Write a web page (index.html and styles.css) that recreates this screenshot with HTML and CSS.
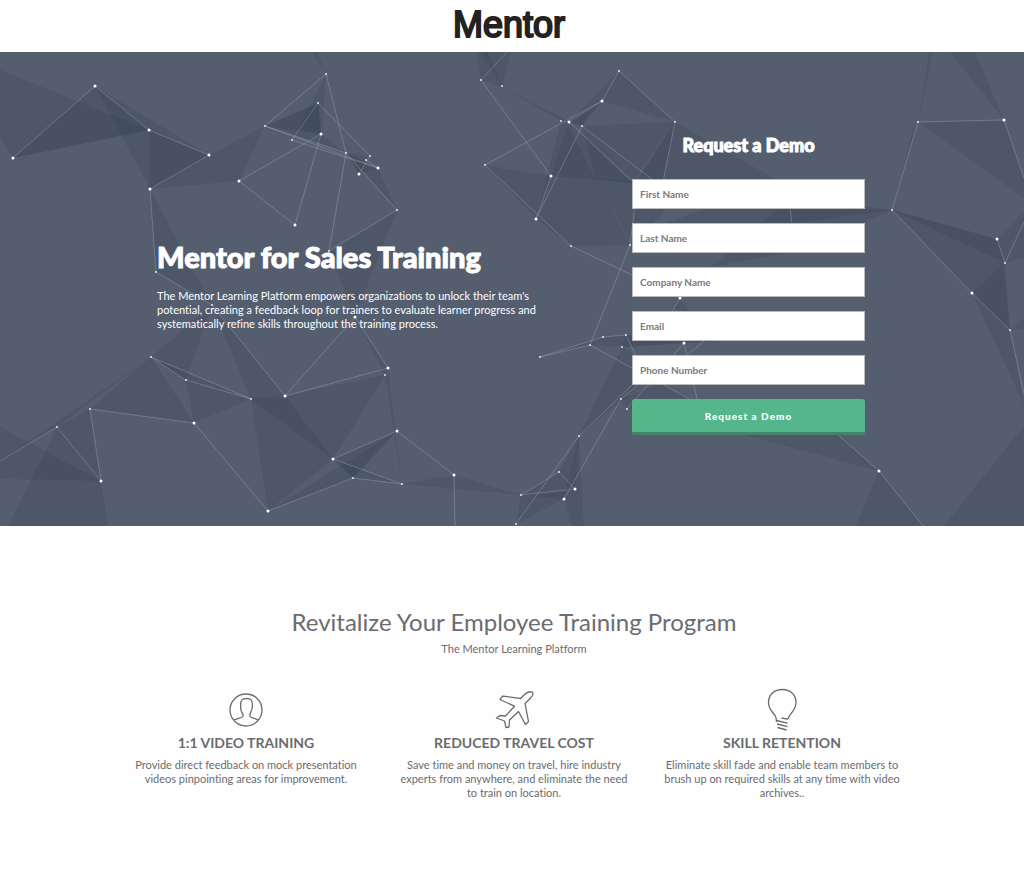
FILE: index.html
```html
<!DOCTYPE html>
<html lang="en">
<head>
<meta charset="utf-8">
<meta name="viewport" content="width=device-width, initial-scale=1">
<title>Mentor for Sales Training</title>
<link rel="stylesheet" href="styles.css">
</head>
<body>
<header class="site-header"><span class="logo">Mentor</span></header>
<main>
<section class="hero">
<svg class="hero-art" viewBox="0 52 1024 474" preserveAspectRatio="xMidYMid slice" aria-hidden="true">
<g class="facets">
<path d="M0 70L149 130L13 158L0 137Z"/><path d="M13 158L95 86L149 130Z"/><path d="M95 86L209 155L150 189Z"/><path d="M149 130L209 155L150 189Z"/><path d="M150 189L209 155L239 181Z"/><path d="M209 155L265 126L239 181Z"/><path d="M150 189L212 305L156 272Z"/>
<path d="M265 126L318 103L321 134Z"/><path d="M265 126L318 103L321 134Z"/><path d="M326 74L322 134L298 129Z"/><path d="M265 126L321 134L346 153Z"/><path d="M346 153L370 156L359 174Z"/><path d="M346 153L378 168L359 174Z"/><path d="M346 153L378 168L397 210Z"/><path d="M329 251L397 210L355 317Z"/><path d="M312 52L317 52L326 74Z"/>
<path d="M477 52L511 52L502 87L481 80Z"/><path d="M480 52L488 52L502 86Z"/><path d="M502 87L569 121L561 121Z"/>
<path d="M619 71L675 122L602 101L569 122Z"/><path d="M602 101L569 122L582 126Z"/><path d="M602 101L569 122L582 126Z"/><path d="M582 126L675 122L632 183L595 178Z"/><path d="M561 121L569 122L632 183L551 176Z"/><path d="M568 125L595 178L551 176Z"/><path d="M485 165L551 176L536 219Z"/><path d="M561 121L551 176L536 219Z"/><path d="M551 176L595 178L630 245L571 246L536 219Z"/><path d="M595 178L690 183L632 245Z"/><path d="M675 122L637 180L663 180Z"/><path d="M675 122L637 180L663 180Z"/><path d="M675 122L663 182L780 182Z"/><path d="M780 207L892 210L790 252L712 267Z"/><path d="M640 232L760 190L892 210L780 225Z"/>
<path d="M929 52L933 52L918 122Z"/><path d="M918 122L892 210L914 126Z"/><path d="M950 52L975 52L1004 120Z"/><path d="M918 122L1004 120L1024 178L1024 198Z"/><path d="M892 210L997 239L1005 263Z"/><path d="M892 210L997 239L972 293Z"/><path d="M997 239L1005 263L1010 330L972 293Z"/><path d="M997 239L1024 212L1024 258L1005 263Z"/><path d="M972 293L1003 263L1010 330Z"/><path d="M972 293L1010 330L1024 405Z"/><path d="M1010 330L1024 318V329Z"/>
<path d="M151 357L212 305L186 380Z"/><path d="M151 357L90 409L194 423Z"/><path d="M151 357L57 427L0 461Z"/><path d="M90 409L57 427L101 481Z"/><path d="M0 427L101 481L0 479Z"/><path d="M57 427L101 481L108 526H8Z"/><path d="M151 357L186 380L251 399Z"/><path d="M151 357L186 380L173 369Z"/><path d="M186 380L251 399L194 423Z"/><path d="M212 305L285 396L251 399Z"/>
<path d="M251 399L285 396L333 459Z"/><path d="M251 399L285 396L333 459Z"/><path d="M251 399L333 459L268 511Z"/><path d="M285 396L385 375L333 459Z"/><path d="M333 459L397 431L353 478Z"/><path d="M268 511L397 431L353 478Z"/><path d="M333 459L353 478L402 484Z"/><path d="M385 375L388 368L402 484Z"/><path d="M355 317L388 368L385 375Z"/><path d="M402 484L454 475L521 495Z"/>
<path d="M540 357L603 337L626 335L590 345Z"/><path d="M590 345L626 335L622 347Z"/><path d="M626 335L720 341L622 347Z"/><path d="M626 335L720 341L622 347Z"/><path d="M622 347L660 370L579 436Z"/><path d="M621 399L660 383L690 399L627 409Z"/><path d="M680 298L672 312H690Z"/><path d="M579 436L564 499L521 495L559 472Z"/><path d="M579 436L575 490L521 495L564 499Z"/><path d="M579 436L584 526H571L564 499Z"/><path d="M521 495L564 499L516 524Z"/>
<path d="M700 423L838 435L879 471Z"/><path d="M879 471L923 526H856Z"/><path d="M1024 426V526H944Z"/>
</g>
<path class="links" d="M13 158L95 86L149 130L209 155L150 189L156 272L212 305L285 396L355 317L388 368L285 396M239 181L321 134L295 225L239 181M265 126L326 74L346 153L329 251L397 210L346 153L265 126L378 168L292 140L318 103L370 156L359 174M366 160L378 168M507 52L481 80L551 176L536 219L582 126L653 180M485 165L602 101L569 122L632 181M485 165L571 246L632 275M602 101L619 71L675 122L663 182M630 245L590 345L632 368M630 245L635 205M540 357L603 337L626 335L640 365M540 357L590 345M632 385L579 436L516 524M564 499L621 399L650 375M627 409L684 343L697 399M672 312L680 298M684 358L704 341M664 385L700 405M521 495L559 472L575 489L521 495M790 207L792 224M892 210L918 122L1004 120L1024 178M892 210L972 293L1010 330L1024 394M997 239L1005 263L1024 222M0 461L57 427L101 481L90 409L194 423L268 511L353 478L402 484L333 459L397 431L454 475L455 526M151 357L251 399L186 380L151 357M838 435L879 471L923 526"/>
<path class="dots-small" d="M156 272h0M326 74h0M318 103h0M265 126h0M292 140h0M346 153h0M370 156h0M366 160h0M397 210h0M329 251h0M481 80h0M502 86h0M619 71h0M561 121h0M582 126h0M675 122h0M485 165h0M571 246h0M630 245h0M918 122h0M892 210h0M1005 263h0M1010 330h0M151 357h0M186 380h0M251 399h0M90 409h0M57 427h0M212 305h0M385 375h0M353 478h0M402 484h0M540 357h0M590 345h0M603 337h0M626 335h0M622 347h0M621 399h0M627 409h0M579 436h0M559 472h0M521 495h0M516 524h0"/>
<path class="dots-large" d="M13 158h0M95 86h0M149 130h0M209 155h0M150 189h0M239 181h0M321 134h0M378 168h0M359 174h0M295 225h0M602 101h0M569 122h0M551 176h0M536 219h0M1004 120h0M997 239h0M972 293h0M194 423h0M101 481h0M285 396h0M388 368h0M397 431h0M333 459h0M454 475h0M268 511h0M355 317h0M680 298h0M684 343h0M575 489h0M564 499h0M879 471h0"/>
</svg>
<div class="hero-content">
<div class="pitch">
<h1>Mentor for Sales Training</h1>
<p>The Mentor Learning Platform empowers organizations to unlock their team's potential, creating a feedback loop for trainers to evaluate learner progress and systematically refine skills throughout the training process.</p>
</div>
<form class="demo-form">
<h2>Request a Demo</h2>
<input type="text" placeholder="First Name" aria-label="First Name">
<input type="text" placeholder="Last Name" aria-label="Last Name">
<input type="text" placeholder="Company Name" aria-label="Company Name">
<input type="email" placeholder="Email" aria-label="Email">
<input type="tel" placeholder="Phone Number" aria-label="Phone Number">
<button type="button">Request a Demo</button>
</form>
</div>
</section>
<section class="benefits">
<h2>Revitalize Your Employee Training Program</h2>
<p class="subtitle">The Mentor Learning Platform</p>
<div class="benefit-grid">
<article class="benefit">
<svg viewBox="0 0 44 44" aria-hidden="true"><circle cx="22" cy="23" r="16"/><path d="M10 33C14 31 18 31 19 29.500C19.500 27.500 18.500 27 17.500 24.500C16.500 23 16.500 21 16.700 18C16.500 13 18.500 11.500 22.500 11.500C27 11.500 28.500 13 28.300 18C28.500 21 28 23 27 24.500C26 27 25.500 27.500 26 29.500C27 31 31 31 34 33"/></svg>
<h3>1:1 VIDEO TRAINING</h3>
<p>Provide direct feedback on mock presentation videos pinpointing areas for improvement.</p>
</article>
<article class="benefit">
<svg viewBox="0 0 44 44" aria-hidden="true"><path d="M40.500 5.200C37.500 4 34.500 5.500 32.500 7.500L28.500 11.500C21 10.500 15 9.500 10.500 9.200L8 12.500L22.500 19.200L13.500 29L8 28.500L4.500 31L12.500 34L14 40.500L17 40L17.500 33L26.500 24.500L33.500 37.500L36.500 34.500L33 16.500L38.500 11C41 9 41.300 7 40.500 5.200Z"/></svg>
<h3>REDUCED TRAVEL COST</h3>
<p>Save time and money on travel, hire industry experts from anywhere, and eliminate the need to train on location.</p>
</article>
<article class="benefit">
<svg viewBox="0 0 44 44" aria-hidden="true"><path d="M16.500 35L16 30.500C15.500 27 8.500 24 8.500 15.500C8.500 7.500 14.500 2.500 22.300 2.500C30 2.500 36 7.500 36 15.500C36 24 29 27 28.500 31L27.500 32.200L21.500 31M16.500 33.500L27.500 36.200M17 37L27.500 39.700M17.500 40.500L26.500 43"/></svg>
<h3>SKILL RETENTION</h3>
<p>Eliminate skill fade and enable team members to brush up on required skills at any time with video archives..</p>
</article>
</div>
</section>
</main>
</body>
</html>
```
FILE: styles.css
```css
* {
  box-sizing: border-box;
}

body {
  margin: 0;
  background: #fefefe;
  color: #6b6c70;
  font: 11px/14px Lato, "Open Sans", sans-serif;
  font-variant-ligatures: none;
}

h1, h2, h3, p {
  margin: 0;
}

.site-header {
  display: flex;
  justify-content: center;
  padding: 4px 0 6px;
}

.logo {
  padding-right: 6px;
  color: #222;
  font: 400 36px/42px "Liberation Sans", Arial, sans-serif;
  -webkit-text-stroke: 2px #222;
}

.hero {
  position: relative;
  padding: 82px 26px 91px 24px;
  background: #555e6f;
  color: #fff;
}

.hero-art {
  position: absolute;
  inset: 0;
  width: 100%;
  height: 100%;
}

.facets {
  fill: #1c3040;
  fill-opacity: 0.13;
}

.links {
  fill: none;
  stroke: #c5cbd8;
  stroke-opacity: 0.28;
}

.dots-small,
.dots-large {
  stroke: #fff;
  stroke-linecap: round;
}

.dots-small {
  stroke-width: 2px;
  stroke-opacity: 0.85;
}

.dots-large {
  stroke-width: 3px;
}

.hero-content {
  position: relative;
  display: flex;
  justify-content: space-between;
  align-items: center;
  gap: 64px;
  max-width: 708px;
  margin: 0 auto;
}

.pitch {
  max-width: 390px;
}

.pitch h1 {
  margin-bottom: 14px;
  font-size: 29px;
  font-weight: 900;
  line-height: 36px;
  white-space: nowrap;
  -webkit-text-stroke: 1px #fff;
}

.demo-form {
  display: flex;
  flex: 0 0 233px;
  flex-direction: column;
  gap: 14px;
}

.demo-form h2 {
  margin-bottom: 9px;
  font-size: 18px;
  font-weight: 900;
  line-height: 22px;
  text-align: center;
  -webkit-text-stroke: 1px #fff;
}

.demo-form input {
  width: 100%;
  height: 30px;
  padding: 0 7px;
  border: 1px solid #bbb;
  background: #fff;
  color: #444;
  font: 700 10px/14px Lato, sans-serif;
}

.demo-form input::placeholder {
  color: #7b7b7b;
  opacity: 1;
}

.demo-form button {
  height: 36px;
  padding: 0;
  border: 0;
  border-bottom: 3px solid #458567;
  border-radius: 3px;
  background: #56b68b;
  color: #fff;
  font: 900 10px/14px Lato, sans-serif;
  letter-spacing: 1px;
}

.benefits {
  padding: 80px 24px 78px 28px;
  text-align: center;
}

.benefits h2 {
  font-size: 24px;
  font-weight: 400;
  line-height: 32px;
}

.subtitle {
  margin-top: 4px;
}

.benefit-grid {
  display: grid;
  grid-template-columns: repeat(3, 1fr);
  gap: 32px;
  max-width: 772px;
  margin: 31px auto 0;
}

.benefit svg {
  display: block;
  width: 44px;
  height: 44px;
  margin: 0 auto;
  fill: none;
  stroke: #6b6c70;
  stroke-width: 1.3px;
  stroke-linejoin: round;
}

.benefit h3 {
  margin: 3px 0 6px;
  font-size: 14px;
  font-weight: 700;
  line-height: 18px;
}
```
